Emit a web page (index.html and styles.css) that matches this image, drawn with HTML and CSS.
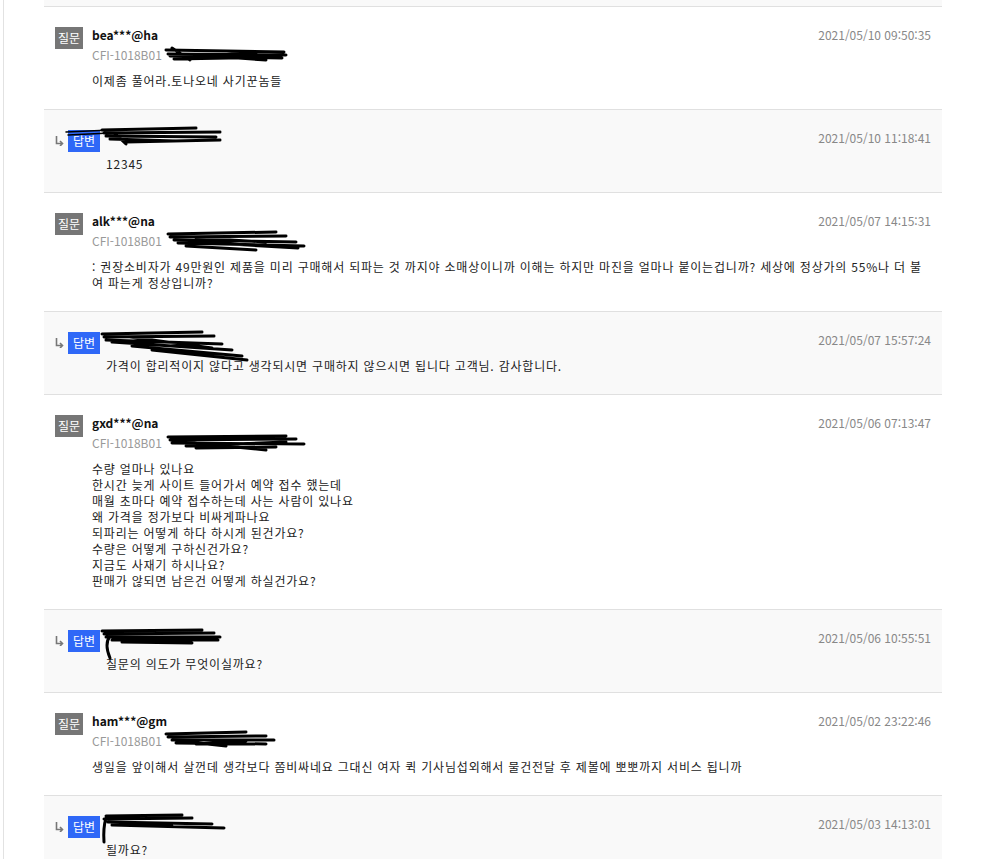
FILE: index.html
```html
<!DOCTYPE html>
<html lang="ko">

<head>
    <meta charset="UTF-8">
    <title>상품 Q&amp;A</title>
    <link rel="stylesheet" href="styles.css">
</head>

<body>
    <div class="page">
        <div class="qna-list">
            <div class="qna-tail"></div>

            <!-- question -->
            <div class="qna-item">
                <div class="head">
                    <span class="badge q">질문</span>
                    <div class="who">
                        <div class="name">bea***@ha</div>
                        <div class="code">CFI-1018B01
                            <svg class="scrib" width="120" height="20" viewBox="0 0 120 20">
                                <path d="M0 4 L118 6 M2 8 L120 9 M4 10 L116 12 M8 13 L112 11 M6 2 L24 14 M30 9 L100 14 M12 11 L90 7" />
                            </svg>
                        </div>
                    </div>
                    <span class="date">2021/05/10 09:50:35</span>
                </div>
                <div class="body">이제좀 풀어라.토나오네 사기꾼놈들</div>
            </div>

            <!-- answer -->
            <div class="qna-item answer">
                <div class="head">
                    <svg class="arrow" width="9" height="10" viewBox="0 0 9 10">
                        <path d="M1.5 0 V7.5 H7 M5 5 L7.5 7.5 L5 10" />
                    </svg>
                    <span class="badge a">답변</span>
                    <svg class="scrib over first" width="156" height="22" viewBox="0 0 156 22">
                        <path class="thin" d="M0 4 L45 2 M2 7 L44 5" />
                        <path d="M36 2 L130 0 M38 5 L154 4 M40 8 L150 9 M44 11 L110 13 M60 14 L154 12 M46 3 L60 16" />
                    </svg>
                    <span class="date">2021/05/10 11:18:41</span>
                </div>
                <div class="body">12345</div>
            </div>

            <div class="qna-item">
                <div class="head">
                    <span class="badge q">질문</span>
                    <div class="who">
                        <div class="name">alk***@na</div>
                        <div class="code">CFI-1018B01
                            <svg class="scrib" width="140" height="20" viewBox="0 0 140 20">
                                <path d="M2 2 L110 0 M4 5 L120 4 M8 8 L130 10 M12 11 L138 14 M20 14 L90 18 M30 6 L100 10 M14 9 L132 16" />
                            </svg>
                        </div>
                    </div>
                    <span class="date">2021/05/07 14:15:31</span>
                </div>
                <div class="body">: 권장소비자가 49만원인 제품을 미리 구매해서 되파는 것 까지야 소매상이니까 이해는 하지만 마진을 얼마나 붙이는겁니까? 세상에 정상가의 55%나 더 불여 파는게 정상입니까?</div>
            </div>

            <div class="qna-item answer">
                <div class="head">
                    <svg class="arrow" width="9" height="10" viewBox="0 0 9 10">
                        <path d="M1.5 0 V7.5 H7 M5 5 L7.5 7.5 L5 10" />
                    </svg>
                    <span class="badge a">답변</span>
                    <svg class="scrib over" width="150" height="36" viewBox="0 0 150 36">
                        <path d="M0 4 L100 2 M2 7 L112 6 M4 10 L120 14 M10 12 L130 20 M30 16 L140 26 M50 20 L145 30 M20 6 L110 18" />
                    </svg>
                    <span class="date">2021/05/07 15:57:24</span>
                </div>
                <div class="body">가격이 합리적이지 않다고 생각되시면 구매하지 않으시면 됩니다 고객님. 감사합니다.</div>
            </div>

            <div class="qna-item">
                <div class="head">
                    <span class="badge q">질문</span>
                    <div class="who">
                        <div class="name">gxd***@na</div>
                        <div class="code">CFI-1018B01
                            <svg class="scrib" width="140" height="20" viewBox="0 0 140 20">
                                <path d="M2 3 L120 2 M4 6 L130 5 M6 9 L138 10 M20 12 L120 8 M30 14 L110 13 M8 7 L100 16" />
                            </svg>
                        </div>
                    </div>
                    <span class="date">2021/05/06 07:13:47</span>
                </div>
                <div class="body">수량 얼마나 있나요<br>한시간 늦게 사이트 들어가서 예약 접수 했는데<br>매월 초마다 예약 접수하는데 사는 사람이 있나요<br>왜 가격을 정가보다 비싸게파나요<br>되파리는 어떻게 하다 하시게 된건가요?<br>수량은 어떻게 구하신건가요?<br>지금도 사재기 하시나요?<br>판매가 않되면 남은건 어떻게 하실건가요?</div>
            </div>

            <div class="qna-item answer">
                <div class="head">
                    <svg class="arrow" width="9" height="10" viewBox="0 0 9 10">
                        <path d="M1.5 0 V7.5 H7 M5 5 L7.5 7.5 L5 10" />
                    </svg>
                    <span class="badge a">답변</span>
                    <svg class="scrib over" width="120" height="32" viewBox="0 0 120 32">
                        <path d="M0 3 L100 2 M2 6 L112 5 M4 9 L118 9 M10 12 L116 12 M20 14 L90 15 M8 8 Q2 16 8 30" />
                    </svg>
                    <span class="date">2021/05/06 10:55:51</span>
                </div>
                <div class="body">질문의 의도가 무엇이실까요?</div>
            </div>

            <div class="qna-item">
                <div class="head">
                    <span class="badge q">질문</span>
                    <div class="who">
                        <div class="name">ham***@gm</div>
                        <div class="code">CFI-1018B01
                            <svg class="scrib" width="110" height="20" viewBox="0 0 110 20">
                                <path d="M0 2 L80 0 M2 5 L100 4 M6 8 L108 8 M10 11 L100 12 M14 9 L60 14 M30 12 L80 9" />
                            </svg>
                        </div>
                    </div>
                    <span class="date">2021/05/02 23:22:46</span>
                </div>
                <div class="body">생일을 앞이해서 살껀데 생각보다 쫌비싸네요 그대신 여자 퀵 기사님섭외해서 물건전달 후 제볼에 뽀뽀까지 서비스 됩니까</div>
            </div>

            <div class="qna-item answer">
                <div class="head">
                    <svg class="arrow" width="9" height="10" viewBox="0 0 9 10">
                        <path d="M1.5 0 V7.5 H7 M5 5 L7.5 7.5 L5 10" />
                    </svg>
                    <span class="badge a">답변</span>
                    <svg class="scrib over" width="125" height="30" viewBox="0 0 125 30">
                        <path d="M4 2 L80 1 M2 5 L90 4 M6 8 L110 10 M10 11 L122 14 M20 9 L70 12 M4 4 Q1 14 2 28" />
                    </svg>
                    <span class="date">2021/05/03 14:13:01</span>
                </div>
                <div class="body">될까요?</div>
            </div>
        </div>
    </div>
</body>

</html>
```

FILE: styles.css
```css
* {
    margin: 0;
    padding: 0;
    box-sizing: border-box;
}

body {
    background: #fff;
    font-family: "Noto Sans CJK KR", "Noto Sans", sans-serif;
    font-size: 12px;
    line-height: 16px;
    color: #222;
}

.page {
    margin-left: 3px;
    min-height: 100vh;
    border-left: 1px solid #e2e2e2;
    padding-left: 40px;
}

.qna-list {
    width: 898px;
}

.qna-tail {
    height: 6px;
    background: #f9f9f9;
}

.qna-item {
    border-top: 1px solid #e0e0e0;
    padding: 20px 11px 20px 11px;
}

.qna-item.answer {
    background: #f9f9f9;
}

.head {
    position: relative;
    display: flex;
    align-items: flex-start;
}

.badge {
    display: inline-block;
    height: 22px;
    line-height: 22px;
    color: #fff;
    font-size: 12px;
    text-align: center;
    white-space: nowrap;
}

.badge.q {
    width: 28px;
    background: #767676;
}

.badge.a {
    width: 32px;
    background: #2f68f7;
}

.who {
    margin-left: 9px;
}

.name {
    font-weight: bold;
    color: #111;
}

.code {
    display: flex;
    align-items: center;
    height: 16px;
    margin-top: 4px;
    color: #999;
    white-space: nowrap;
}

.scrib {
    overflow: visible;
    margin-left: 4px;
    margin-top: 2px;
}

.scrib path {
    fill: none;
    stroke: #000;
    stroke-width: 3;
    stroke-linecap: round;
}

.scrib path.thin {
    stroke-width: 1.5;
}

.scrib.over {
    position: absolute;
    left: 47px;
    top: -2px;
    margin: 0;
}

.scrib.over.first {
    left: 11px;
}

.arrow {
    margin-top: 6px;
    margin-right: 4px;
}

.arrow path {
    fill: none;
    stroke: #777;
    stroke-width: 1.6;
}

.date {
    margin-left: auto;
    color: #888;
}

.body {
    margin-top: 10px;
    padding-left: 37px;
    letter-spacing: 0.8px;
    color: #222;
}

.answer .body {
    margin-top: 4px;
    padding-left: 51px;
}
```
